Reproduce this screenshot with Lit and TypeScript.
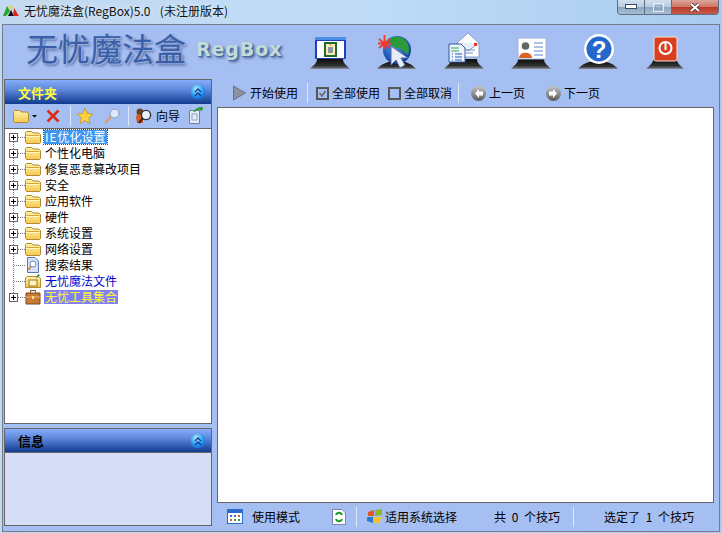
import { LitElement, html, css, svg } from "lit";
import { customElement } from "lit/decorators.js";

const defs = svg`<defs>
  <linearGradient id="base" x1="0" x2="0" y1="0" y2="1"><stop offset="0" stop-color="#0c0c0c"/><stop offset=".7" stop-color="#333"/><stop offset="1" stop-color="#8a8f9c"/></linearGradient>
  <linearGradient id="fold" x1="0" x2="0" y1="0" y2="1"><stop offset="0" stop-color="#fff3ac"/><stop offset="1" stop-color="#f4c850"/></linearGradient>
  <radialGradient id="ball" cx=".4" cy=".3" r=".8"><stop offset="0" stop-color="#b8ecff"/><stop offset=".55" stop-color="#2a9af0"/><stop offset="1" stop-color="#0a5cc8"/></radialGradient>
  <linearGradient id="btn" x1="0" x2="0" y1="0" y2="1"><stop offset="0" stop-color="#c4c4c4"/><stop offset="1" stop-color="#5a5a5a"/></linearGradient>
  <radialGradient id="globe" cx=".4" cy=".35" r=".7"><stop offset="0" stop-color="#4a98f0"/><stop offset="1" stop-color="#0a3aa0"/></radialGradient>
</defs>`;

const base = svg`<path d="M0 34C3 30 7 29 7 24H33C33 29 37 30 40 34Z" fill="url(#base)"/>`;
const bigIcons = [
  svg`${base}<rect x="5" y="2" width="31" height="22" rx="1" fill="#1f3fb8"/><rect x="5" y="2" width="31" height="3" fill="#4a8ee8"/><rect x="7" y="6" width="27" height="17" fill="#fff"/><rect x="14" y="7" width="13" height="15" fill="#1f6a30"/><rect x="16" y="9" width="9" height="11" fill="#ffedb0"/><path d="M18 13h5M18 15h5M18 17h5" stroke="#1b3fa0"/><path d="M19 10h3" stroke="#e8a020"/>`,
  svg`<path d="M0 34C4 29 11 26 20 26S35 29 39 34Z" fill="url(#base)"/><circle cx="20" cy="15" r="14" fill="url(#globe)"/><path d="M11 5C15 1 24 1 27 4 32 8 33 14 31 20 27 17 24 13 20 13 16 12 12 10 11 5Z" fill="#2a9a3a"/><path d="M14 11V30L19 25 23 33 28 30 24 23H31Z" fill="#e6ecf8" stroke="#5b6a9a"/><path d="M2 4 13 13M13 4 2 13M1 8.500H14M7.500 0V14" stroke="#f23a2a" stroke-width="1.800"/>`,
  svg`${base}<path d="M13 8 24 -2 35 8V22H13Z" fill="#fff" stroke="#8aa0c8"/><path d="M13 8 24 16 35 8" fill="#e8eef8" stroke="#8aa0c8"/><rect x="30" y="8" width="3" height="3" fill="#e33"/><path d="M22 15h9M22 18h7" stroke="#6a8ac8"/><path d="M5 9H17L21 13V27H5Z" fill="#eef4ff" stroke="#33589c"/><path d="M7 13h8M7 16h8" stroke="#3cab4a" stroke-width="1.200"/><path d="M11 19h7M11 22h7M11 25h7M8 19h1M8 22h1M8 25h1" stroke="#2a5ac0"/>`,
  svg`${base}<rect x="7" y="3" width="28" height="21" fill="#fff" stroke="#9fb4d8"/><circle cx="14.500" cy="11" r="3.800" fill="#666"/><path d="M8 23C8 16 21 16 21 23Z" fill="#d9642a"/><path d="M23 8h9M23 12h9M23 16h9M23 20h9" stroke="#5b82c8"/>`,
  svg`<path d="M0 34C4 29 10 26 20 26S36 29 40 34Z" fill="url(#base)"/><circle cx="21" cy="14" r="15" fill="#fff"/><circle cx="21" cy="14" r="12.500" fill="#2468cc"/><text x="21" y="23" font-family="Liberation Sans" font-weight="700" font-size="24" text-anchor="middle" fill="#fff">?</text>`,
  svg`<path d="M1 34C5 30 7 29 9 24H31C33 29 35 30 39 34Z" fill="url(#base)"/><rect x="9" y="2" width="23" height="24" rx="2" fill="#d8401f" stroke="#f6e4d8"/><circle cx="20.500" cy="13" r="6" fill="none" stroke="#fff" stroke-width="2"/><path d="M20.500 8V15" stroke="#fff" stroke-width="2"/>`,
];

const folder = svg`<svg width="16" height="14" viewBox="0 0 16 14"><path d="M.5 12.500V2.500L1.500 1.500H6.500L8 3H14L15.500 4.500V12.500L14.500 13.500H1.500Z" fill="url(#fold)" stroke="#b48a2c"/><path d="M1.500 5.500H14.500" stroke="#d8a840"/><path d="M1.500 6.500H14.500" stroke="#fff6c0"/></svg>`;
const iconSearch = svg`<svg width="16" height="16" viewBox="0 0 16 16"><path d="M2.500 .5H10L13.500 4V15.500H2.500Z" fill="#d6e2f6" stroke="#5d76ac"/><circle cx="8" cy="7" r="3" fill="#fff" stroke="#6a8ac8"/><path d="M6 9 3.500 13" stroke="#c89050" stroke-width="2"/></svg>`;
const iconMagic = svg`<svg width="16" height="15" viewBox="0 0 16 15"><path d="M.5 13.500V4L2 2.500H13.500L15.500 4.500V13.500Z" fill="url(#fold)" stroke="#b48a2c"/><rect x="4" y="6" width="8" height="6" fill="#fff4c0" stroke="#9a7624"/><path d="M11 5 13 0 15 1Z" fill="#2a8a2a"/></svg>`;
const iconCase = svg`<svg width="16" height="16" viewBox="0 0 16 16"><path d="M5.500 3.500V1.500H10.500V3.500" fill="none" stroke="#7a4a20"/><path d="M1 4H15V15H1Z" fill="#c87a34" stroke="#7a4a20"/><path d="M1 8H15" stroke="#f0b070"/><path d="M7 7H9V10H7Z" fill="#ffe090"/></svg>`;

const tree = [
  { t: html`<span class="latin">IE</span>优化设置`, c: "sel", exp: 1, i: folder },
  { t: "个性化电脑", c: "", exp: 1, i: folder },
  { t: "修复恶意篡改项目", c: "", exp: 1, i: folder },
  { t: "安全", c: "", exp: 1, i: folder },
  { t: "应用软件", c: "", exp: 1, i: folder },
  { t: "硬件", c: "", exp: 1, i: folder },
  { t: "系统设置", c: "", exp: 1, i: folder },
  { t: "网络设置", c: "", exp: 1, i: folder },
  { t: "搜索结果", c: "", exp: 0, i: iconSearch },
  { t: "无忧魔法文件", c: "blue", exp: 0, i: iconMagic },
  { t: "无忧工具集合", c: "hl", exp: 1, i: iconCase },
];

@customElement("app-root")
export class AppRoot extends LitElement {
  static styles = css`
    :host { display: block; width: 722px; height: 533px; overflow: hidden; font-family: "Noto Sans CJK SC", "Liberation Sans", sans-serif; font-size: 12px; color: #000; }
    * { box-sizing: border-box; }
    .window { height: 533px; display: flex; flex-direction: column; background: linear-gradient(90deg, #c3d9f0 0%, #bfdcf8 50%, #a9cbee 100%); padding: 0 2px 1px; }
    .title { height: 24px; flex: none; display: flex; align-items: flex-start; margin: 0 -2px; padding-left: 3px; }
    .logo16 { margin: 6px 5px 0 0; flex: none; }
    .title-text { margin-top: 1px; line-height: 19px; font-size: 12px; color: #111; white-space: pre; word-spacing: 2px; text-shadow: 0 0 6px #e8f4ff; }
    .wbtns { margin-left: auto; margin-right: 3px; display: flex; height: 15px; border: 1px solid #5d6f84; border-top: none; border-radius: 0 0 4px 4px; overflow: hidden; }
    .wb { height: 100%; display: flex; align-items: center; justify-content: center; border-right: 1px solid #5d6f84; background: linear-gradient(#d2dfed 0%, #b8cbe0 50%, #8ea6c0 52%, #a9bdd3 100%); }
    .wb.min { width: 27px; } .wb.max { width: 27px; }
    .wb.close { width: 46px; border: none; background: linear-gradient(#dca79c 0%, #cf7466 50%, #b83a2a 52%, #c85a4a 100%); color: #fff; }
    .client { flex: 1; min-height: 0; border: 1px solid #6f7d8e; background: #a6bff2; display: flex; flex-direction: column; }
    .banner { height: 54px; flex: none; display: flex; align-items: flex-start; }
    .brand { margin: 8px 0 0 23px; width: 160px; font-family: "Liberation Serif", "Noto Sans CJK SC", serif; font-size: 32px; line-height: 34px; white-space: nowrap; color: #3a5fa8; text-shadow: 1px 1px 0 #9ab0e0, 2px 2px 3px #4c6296; }
    .reg { margin: 12px 0 0 10px; width: 87px; font-family: "DejaVu Sans", sans-serif; font-weight: 700; font-size: 19px; line-height: 24px; letter-spacing: .9px; color: #c2dcdc; text-shadow: 1px 1px 0 #4a6890, 2px 2px 3px #3e5a90; white-space: nowrap; }
    .big { margin: 10px 0 0 27px; display: flex; gap: 27px; }
    .big svg { display: block; overflow: visible; }
    .main { flex: 1; min-height: 0; display: flex; padding: 0 1px 0 1px; }
    .left { width: 208px; flex: none; display: flex; flex-direction: column; gap: 4px; padding-bottom: 5px; }
    .panel { border: 1px solid #666; display: flex; flex-direction: column; }
    .folders { height: 345px; flex: none; }
    .info { flex: 1; }
    .head { height: 24px; flex: none; display: flex; align-items: center; justify-content: space-between; padding: 0 5px 0 13px; background: linear-gradient(#86acfa 0%, #5f88dc 40%, #103a8e 100%); font-weight: 700; font-size: 13px; }
    .head.y { color: #ffff3c; } .info .head { border-bottom: 1px solid #666; }
    .tb { height: 25px; flex: none; display: flex; align-items: center; border-bottom: 1px solid #666; background: #a6bff2; padding-left: 8px; }
    .tb svg { display: block; flex: none; }
    .sep { width: 1px; height: 20px; background: #dfe8fa; flex: none; }
    .tree { flex: 1; background: #fff; position: relative; }
    .vline { position: absolute; left: 8px; top: 8px; height: 160px; border-left: 1px dotted #777; }
    .row { height: 16px; display: flex; align-items: center; position: relative; white-space: nowrap; }
    .exp { width: 9px; height: 9px; margin-left: 4px; flex: none; border: 1px solid #666; background: #fff; display: flex; align-items: center; justify-content: center; position: relative; }
    .exp::before { content: ""; position: absolute; left: 1px; right: 1px; top: 3px; height: 1px; background: #000; }
    .exp::after { content: ""; position: absolute; top: 1px; bottom: 1px; left: 3px; width: 1px; background: #000; }
    .nox { width: 5px; margin-left: 4px; flex: none; }
    .dots { width: 7px; flex: none; border-top: 1px dotted #777; }
    .dots.long { width: 11px; }
    .ic { width: 16px; flex: none; display: flex; }
    .lab { margin-left: 3px; padding: 0 1px; line-height: 14px; height: 14px; font-size: 12px; }
    .lab.sel { background: #3d97f2; color: #fff; outline: 1px dotted #704010; }
    .latin { letter-spacing: 1px; }
    .lab.blue { color: #0000d0; }
    .lab.hl { background: #8080f8; color: #ffff20; }
    .info-body { flex: 1; background: #d6def6; }
    .right { flex: 1; min-width: 0; margin-left: 5px; display: flex; flex-direction: column; }
    .rt { height: 28px; flex: none; display: flex; align-items: center; padding-left: 16px; white-space: nowrap; }
    .rt svg { display: block; flex: none; }
    .content { flex: 1; margin-right: 4px; background: #fff; border: 1px solid #666; }
    .status { height: 28px; flex: none; display: flex; align-items: center; white-space: pre; padding-bottom: 1px; }
    .status svg { display: block; flex: none; }
    .t { line-height: 16px; }
    .wide { word-spacing: 3px; }
    .ml3 { margin-left: 3px; } .ml4 { margin-left: 4px; }
  `;

  render() {
    const ball = html`<svg width="16" height="16" viewBox="0 0 16 16"><circle cx="8" cy="8" r="7.500" fill="url(#ball)"/><path d="M5 8 8 5 11 8M5 12 8 9 11 12" fill="none" stroke="#0a3a90" stroke-width="1.300"/></svg>`;
    return html`<div class="window">
      <svg width="0" height="0" style="position:absolute">${defs}</svg>
      <div class="title">
        <svg class="logo16" width="16" height="10" viewBox="0 0 16 10"><path d="M4 0 7 5 3 10H0Z" fill="#2fa32f"/><path d="M6 0H10L8 4Z" fill="#f6d21e"/><path d="M8 4 11 10H5Z" fill="#111"/><path d="M11 2 16 10H10Z" fill="#e0261c"/></svg>
        <span class="title-text">无忧魔法盒(RegBox)5.0  (未注册版本)</span>
        <div class="wbtns">
          <div class="wb min"><svg width="12" height="6" viewBox="0 0 12 6"><rect x=".5" y=".5" width="11" height="4" fill="#fff" stroke="#3a4a60"/></svg></div>
          <div class="wb max"><svg width="11" height="9" viewBox="0 0 11 9"><rect x=".5" y=".5" width="10" height="8" fill="none" stroke="#e4edf6"/><rect x="2.500" y="2.500" width="6" height="3" fill="none" stroke="#8fa2b8"/></svg></div>
          <div class="wb close"><svg width="12" height="9" viewBox="0 0 12 9"><path d="M2 1 10 8M10 1 2 8" stroke="#4a2a2a" stroke-width="3.400"/><path d="M2 1 10 8M10 1 2 8" stroke="#fff" stroke-width="2"/></svg></div>
        </div>
      </div>
      <div class="client">
        <div class="banner">
          <div class="brand">无忧魔法盒</div>
          <div class="reg">RegBox</div>
          <div class="big">${bigIcons.map((i) => html`<svg width="40" height="35" viewBox="0 0 40 35">${i}</svg>`)}</div>
        </div>
        <div class="main">
          <div class="left">
            <div class="panel folders">
              <div class="head y"><span>文件夹</span>${ball}</div>
              <div class="tb">
                <svg width="24" height="14" viewBox="0 0 24 14"><path d="M.5 12.500V2.500L1.500 1.500H6.500L8 3H14L15.500 4.500V12.500L14.500 13.500H1.500Z" fill="url(#fold)" stroke="#b48a2c"/><path d="M19 6h5l-2.500 2.500Z" fill="#000"/></svg>
                <svg style="margin-left:9px" width="14" height="14" viewBox="0 0 14 14"><path d="M1.500 1.500 12.500 12.500M12.500 1.500 1.500 12.500" stroke="#e02a18" stroke-width="2.600"/></svg>
                <span class="sep" style="margin:0 6px 0 10px"></span>
                <svg width="16" height="16" viewBox="0 0 16 16"><path d="M8 0 10.400 5.400 16 6 11.800 9.800 13 15.500 8 12.600 3 15.500 4.200 9.800 0 6 5.600 5.400Z" fill="#ffd23c" stroke="#b8882a" stroke-width=".7"/></svg>
                <svg style="margin-left:11px" width="16" height="16" viewBox="0 0 16 16"><circle cx="10.500" cy="5.500" r="4.500" fill="#dce9fb" stroke="#8a9cb8"/><path d="M7 9 1 15" stroke="#dc9a6a" stroke-width="2"/></svg>
                <span class="sep" style="margin:0 6px 0 8px"></span>
                <svg width="17" height="16" viewBox="0 0 17 16"><circle cx="5" cy="4" r="3.500" fill="#6a4028"/><path d="M1 9C1 6 8 5 8 9V15H2Z" fill="#d05a20"/><circle cx="11" cy="7" r="4.600" fill="#e8f2ff" stroke="#333" stroke-width="1.400"/><path d="M8 10 4 15" stroke="#222" stroke-width="2"/></svg>
                <span class="t ml4">向导</span>
                <svg style="margin-left:8px" width="15" height="18" viewBox="0 0 15 18"><path d="M1.500 3.500H11.500V16.500H1.500Z" fill="#e4ecfa" stroke="#6a82a8"/><rect x="4" y="7" width="5" height="6" fill="none" stroke="#8aa0c0"/><path d="M6 5C7 2 10 1 13 1L11 0 15 1 13 4V2C11 2 8 3 6 5Z" fill="#2a9a2a" stroke="#2a9a2a"/></svg>
              </div>
              <div class="tree">
                <div class="vline"></div>
                ${tree.map((r) => html`<div class="row">
                  ${r.exp ? html`<span class="exp"></span><span class="dots"></span>` : html`<span class="nox"></span><span class="dots long"></span>`}
                  <span class="ic">${r.i}</span>
                  <span class="lab ${r.c}">${r.t}</span>
                </div>`)}
              </div>
            </div>
            <div class="panel info">
              <div class="head"><span>信息</span>${ball}</div>
              <div class="info-body"></div>
            </div>
          </div>
          <div class="right">
            <div class="rt">
              <svg width="13" height="16" viewBox="0 0 13 16"><path d="M.5 1 12.500 8 .5 15Z" fill="#8a929e" stroke="#6a7280"/></svg>
              <span class="t ml4">开始使用</span>
              <span class="sep" style="margin:0 8px 0 9px"></span>
              <svg width="13" height="13" viewBox="0 0 13 13"><rect x="1" y="1" width="11" height="11" fill="none" stroke="#555" stroke-width="2"/><path d="M3.500 6 6 9 9.500 4" fill="none" stroke="#6a6a6a" stroke-width="1.600"/></svg>
              <span class="t ml3">全部使用</span>
              <svg style="margin-left:8px" width="13" height="13" viewBox="0 0 13 13"><rect x="1" y="1" width="11" height="11" fill="none" stroke="#555" stroke-width="2"/></svg>
              <span class="t ml3">全部取消</span>
              <span class="sep" style="margin:0 12px 0 6px"></span>
              <svg width="15" height="15" viewBox="0 0 15 15"><circle cx="7.500" cy="7.500" r="7.500" fill="url(#btn)"/><path d="M8 3 4 7.500 8 12V9.500H12V5.500H8Z" fill="#fff"/></svg>
              <span class="t ml3">上一页</span>
              <svg style="margin-left:21px" width="15" height="15" viewBox="0 0 15 15"><circle cx="7.500" cy="7.500" r="7.500" fill="url(#btn)"/><path d="M7 3 11 7.500 7 12V9.500H3V5.500H7Z" fill="#fff"/></svg>
              <span class="t ml3">下一页</span>
            </div>
            <div class="content"></div>
            <div class="status">
              <svg style="margin-left:10px" width="16" height="15" viewBox="0 0 16 15"><rect x=".5" y=".5" width="15" height="14" fill="#fff" stroke="#2a6ac8"/><rect x="1" y="1" width="14" height="3" fill="#2a6ac8"/><path d="M3 6h2v2H3zM7 6h2v2H7z" fill="#3070c8"/><path d="M11 6h2v2h-2zM3 10h2v2H3z" fill="#d85a30"/><path d="M7 10h2v2H7zM11 10h2v2h-2z" fill="#3ca03c"/></svg>
              <span class="t" style="margin-left:9px">使用模式</span>
              <svg style="margin-left:32px" width="14" height="16" viewBox="0 0 14 16"><path d="M.5 .5H10L13.500 4V15.500H.5Z" fill="#fff" stroke="#7a86b8"/><path d="M4 6C5 3 9 3 10 6M10 10C9 13 5 13 4 10" fill="none" stroke="#1f9a2a" stroke-width="2"/></svg>
              <span class="sep" style="margin:0 10px 0 10px"></span>
              <svg width="15" height="15" viewBox="0 0 15 15"><path d="M1 3 7 1V7H1Z" fill="#e2542a"/><path d="M8 1 15 0V6L8 7Z" fill="#8ab82a"/><path d="M0 8H6V14L0 12Z" fill="#2a78d8"/><path d="M7 8H14L13 14 7 14Z" fill="#f2c42a"/></svg>
              <span class="t ml3">适用系统选择</span>
              <span class="t wide" style="margin-left:37px">共 0 个技巧</span>
              <span class="sep" style="margin:0 30px 0 13px"></span>
              <span class="t wide">选定了 1 个技巧</span>
            </div>
          </div>
        </div>
      </div>
    </div>`;
  }
}
